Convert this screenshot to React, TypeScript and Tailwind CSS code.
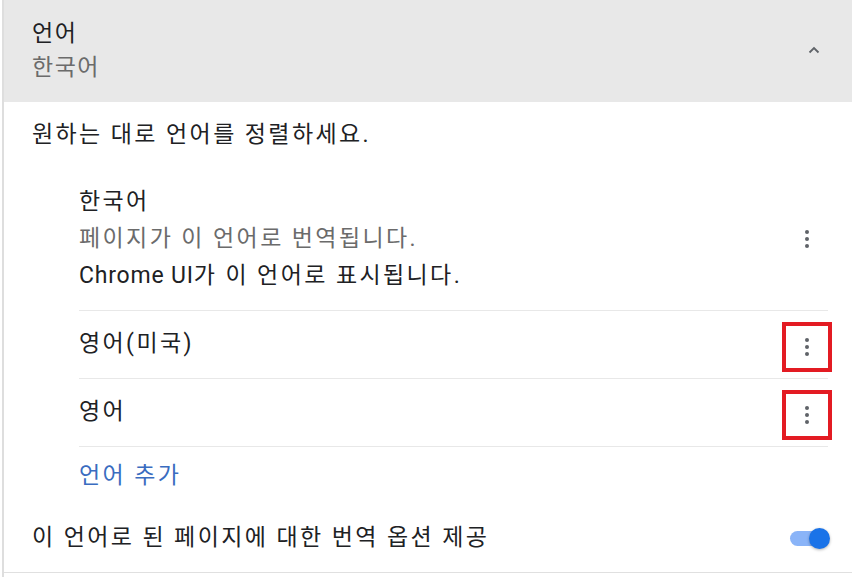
const font = { fontFamily: '"Roboto", "Noto Sans CJK KR", sans-serif' };

function Kebab({ marked }: { marked?: boolean }) {
  return (
    <button
      className={
        'flex h-[50px] w-[50px] flex-col items-center justify-center gap-[3px] ' +
        (marked ? 'border-[4px] border-[#e31b23]' : 'border-[4px] border-transparent')
      }
    >
      <span className="h-[4px] w-[4px] rounded-full bg-[#5f6368]" />
      <span className="h-[4px] w-[4px] rounded-full bg-[#5f6368]" />
      <span className="h-[4px] w-[4px] rounded-full bg-[#5f6368]" />
    </button>
  );
}

export default function App() {
  const langs = ['영어(미국)', '영어'];

  return (
    <div
      className="h-[577px] w-[852px] overflow-hidden bg-white pl-[2px] text-[23px] tracking-[2.4px]"
      style={font}
    >
      <div className="h-full border-l-2 border-[#dedede]">
        {/* 헤더 */}
        <div className="flex h-[102px] items-center justify-between bg-[#e8e8e8] pl-[28px] pr-[30px]">
          <div className="flex flex-col">
            <span className="leading-[34px] tracking-[1.5px] text-[#202124]">언어</span>
            <span className="leading-[34px] tracking-[1.5px] text-[#6b6b6b]">한국어</span>
          </div>
          <svg width="12" height="8" viewBox="0 0 12 8" className="mr-[2px] mb-[2px]">
            <polyline points="1.5,6.5 6,2 10.5,6.5" fill="none" stroke="#5f6368" strokeWidth="1.8" />
          </svg>
        </div>

        <div className="flex h-[66px] items-center pl-[28px] text-[#202124]">
          원하는 대로 언어를 정렬하세요.
        </div>

        {/* 언어 목록 */}
        <div className="ml-[75px] mr-[24px]">
          <div className="flex items-center justify-between border-b border-[#e8e8e8] pt-[15px] pb-[16px]">
            <div className="flex flex-col leading-[37px]">
              <span className="text-[#202124]">한국어</span>
              <span className="text-[#6b6b6b]">페이지가 이 언어로 번역됩니다.</span>
              <span className="text-[#202124]">
                <span className="tracking-[0.8px]">Chrome UI</span>가 이 언어로 표시됩니다.
              </span>
            </div>
            <div className="-mr-[4px]">
              <Kebab />
            </div>
          </div>
          {langs.map(l => (
            <div
              key={l}
              className="flex h-[68px] items-center justify-between border-b border-[#e8e8e8]"
            >
              <span className="text-[#202124]">{l}</span>
              <div className="-mr-[4px] mt-[4px]">
                <Kebab marked />
              </div>
            </div>
          ))}
          <div className="flex h-[58px] items-center text-[#3a6cc0]">언어 추가</div>
        </div>

        {/* 번역 옵션 */}
        <div className="flex h-[68px] items-center justify-between border-b border-[#e0e0e0] pl-[28px] pr-[22px]">
          <span className="text-[#202124]">이 언어로 된 페이지에 대한 번역 옵션 제공</span>
          <div className="relative h-[21px] w-[40px]">
            <div className="absolute left-0 top-[3px] h-[15px] w-[34px] rounded-full bg-[#8ab4f8]" />
            <div className="absolute right-0 top-0 h-[21px] w-[21px] rounded-full bg-[#1a73e8] shadow-[0_1px_3px_rgba(0,0,0,0.3)]" />
          </div>
        </div>
      </div>
    </div>
  );
}
